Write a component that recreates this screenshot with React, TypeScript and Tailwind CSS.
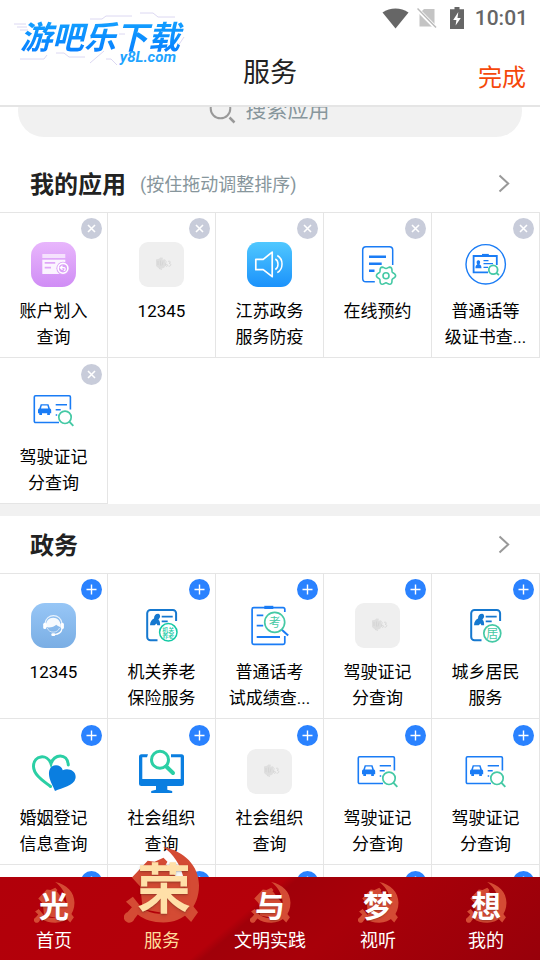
import React from "react";

interface IApp {
  name: string;
  icon: React.ReactNode;
}

interface ITab {
  label: string;
  char: string;
  active?: boolean;
}

const BLUE = "#1a7cf5";
const DEEP = "#1578cf";
const GREEN = "#45c9a5";
const CJK = "'Noto Sans CJK SC', sans-serif";

// six rounded teeth around (31, 33.7)
const gearPath =
  Array.from({ length: 60 }, (_, i) => {
    const a = (i / 60) * Math.PI * 2;
    const r = 8.4 + 1.2 * Math.cos(6 * a);
    return `${i ? "L" : "M"}${(31 + r * Math.cos(a)).toFixed(2)} ${(33.7 + r * Math.sin(a)).toFixed(2)}`;
  }).join("") + "z";

const Icon = ({ children }: { children: React.ReactNode }) => (
  <svg viewBox="0 0 45 45" className="block size-[45px]" fill="none" aria-hidden="true">
    {children}
  </svg>
);

const AccountIcon = () => (
  <Icon>
    <defs>
      <linearGradient id="account" x1="0" y1="0" x2="0" y2="1">
        <stop offset="0" stopColor="#e8b6fc" />
        <stop offset="1" stopColor="#d08df5" />
      </linearGradient>
    </defs>
    <rect width="45" height="45" rx="14" fill="url(#account)" />
    <rect x="11.3" y="12" width="23" height="4" fill="#fff" fillOpacity=".65" />
    <path d="M11.3 17.7h23V32h-23z" fill="#fff" fillOpacity=".88" />
    <path d="M13.7 20.8h10.5M13.7 25.7H20" stroke="#dfa6f8" strokeWidth="1.7" />
    <circle cx="32" cy="26.3" r="6.6" fill="#dca0f8" />
    <circle cx="32" cy="26.3" r="4.9" stroke="#fff" strokeWidth="1.6" />
    <path d="M31.5 23.7l-2.3 2 2.3 2M29.5 25.7h3.6c1.5 0 1.5 2.8-.4 3" stroke="#fff" strokeWidth="1.2" />
  </Icon>
);

const EmptyIcon = () => (
  <Icon>
    <rect width="45" height="45" rx="9" fill="#efefef" />
    <path d="M17 17.5l3-.8 1.3-1.2 2.700.3-.6 2 2.400-.5 1.200 1.300-1 2.400 1 1.800-1.800 3-2.800 1-2.800-.5-2.500-2.200z" fill="#dedede" />
    <path d="M19 19v4M21.5 18.5v5M24 19.5l-1 4M20 26.5l3 1" stroke="#cfcfcf" strokeWidth=".6" />
    <path d="M27.500 19.500c-1.500 2-1.300 5 .2 4.800 1.600-.3.8-2.800-.7-1.600M29 19.500c2.600-1.200 3 1.200 1 1.800 2.600 0 2.300 3.400-.5 2.800" stroke="#d3d3d3" strokeWidth=".8" />
  </Icon>
);

const SpeakerIcon = () => (
  <Icon>
    <defs>
      <linearGradient id="speaker" x1="0" y1="0" x2="0" y2="1">
        <stop offset="0" stopColor="#50c8ff" />
        <stop offset="1" stopColor="#1b92fb" />
      </linearGradient>
    </defs>
    <rect width="45" height="45" rx="11" fill="url(#speaker)" />
    <path d="M8.8 17.3h7.4l9-7.2v24.6l-9-7H8.8z" stroke="#fff" strokeWidth="1.7" strokeLinejoin="round" />
    <path d="M28.3 17c3.6 2 3.6 8.3 0 10.5M30.3 13.5c6.3 3.6 6.3 13.6 0 17.2" stroke="#fff" strokeWidth="1.5" />
  </Icon>
);

const BookingIcon = () => (
  <Icon>
    <path d="M19.8 39.7H11a3.3 3.3 0 0 1-3.3-3.3V8A3.3 3.3 0 0 1 11 4.7h23.4A3.3 3.3 0 0 1 37.7 8v15" stroke={BLUE} strokeWidth="1.5" />
    <path d="M14 14.7h17M14 21.7h12.7M14 28.7h5.5" stroke={BLUE} strokeWidth="2.5" />
    <path d={gearPath} stroke={GREEN} strokeWidth="1.6" strokeLinejoin="round" />
    <circle cx="31" cy="33.7" r="3" stroke={GREEN} strokeWidth="1.6" />
  </Icon>
);

const MandarinIcon = () => (
  <Icon>
    <circle cx="22.7" cy="22.3" r="19.7" stroke={BLUE} strokeWidth="1.4" />
    <path d="M25 30.3H10.6V14h23.2v9" stroke={BLUE} strokeWidth="1.8" />
    <path d="M19 14.5v-2.6h6.8v2.6z" fill={BLUE} />
    <path d="M12.4 26.3c0-2.7 1-3.6 2-3.8-1.4-2-.7-4.2 1-4.2s2.4 2.2 1 4.2c1.1.2 2.1 1.1 2.1 3.8z" fill={BLUE} />
    <path d="M20.5 18.7h5M20.5 21.7H30M20.5 25.3H25" stroke={BLUE} strokeWidth="1.3" />
    <circle cx="30.2" cy="27.7" r="4.4" stroke={GREEN} strokeWidth="1.8" />
    <path d="M33.3 31l2.7 2" stroke={GREEN} strokeWidth="1.8" />
  </Icon>
);

const LicenceIcon = () => (
  <Icon>
    <path d="M28 34.5H4.5a1.2 1.2 0 0 1-1.2-1.2V9a1.2 1.2 0 0 1 1.2-1.2h33.7A1.2 1.2 0 0 1 39.4 9v12.5" stroke={BLUE} strokeWidth="1.6" />
    <path d="M9.7 16.2h7.8l1.4 4.3c1 .4 1.3 1 1.3 2v2.8h-1.3V27h-2.7v-1.7H11V27H8.3v-1.7H7v-2.8c0-1 .3-1.600 1.300-2z" fill={BLUE} />
    <path d="M10.8 17.6h5.6l.8 2.9H10z" fill="#fff" />
    <path d="M24.7 16.7H36M24.7 21.8h5M24.7 27h1.5" stroke={BLUE} strokeWidth="1.6" />
    <circle cx="34" cy="29.3" r="6.2" stroke={GREEN} strokeWidth="1.7" />
    <path d="M38.3 33.7l4 4.2" stroke={GREEN} strokeWidth="1.9" />
  </Icon>
);

const HotlineIcon = () => (
  <Icon>
    <defs>
      <linearGradient id="hotline" x1="0" y1="0" x2="0" y2="1">
        <stop offset="0" stopColor="#97c6f6" />
        <stop offset="1" stopColor="#7aaee4" />
      </linearGradient>
    </defs>
    <rect width="45" height="45" rx="14" fill="url(#hotline)" />
    <path d="M14 20.5c1-10.5 16-10.5 17 0" stroke="#fff" strokeOpacity=".8" strokeWidth="1.2" />
    <path d="M15 24c-1.500-12.500 15.700-12.500 14.700 0-1.900-.4-3.600-1.300-4.400-2.300-2 2-6.800 3.600-10.300 2.300z" fill="#fff" fillOpacity=".92" />
    <path d="M16.3 25c1.500 5.500 10.500 5.500 12.200 0" stroke="#fff" strokeOpacity=".6" strokeWidth="1" />
    <rect x="12.200" y="19.700" width="3.300" height="6.400" rx="1.600" fill="#fff" />
    <rect x="29.600" y="19.700" width="3.300" height="6.400" rx="1.600" fill="#fff" />
    <path d="M31 26c-.8 3.500-4 5.300-7.500 5.500" stroke="#fff" strokeWidth="1.200" />
    <rect x="20.300" y="30.300" width="4" height="2.600" rx="1.200" fill="#fff" />
  </Icon>
);

const PersonCard = ({ children }: { children: React.ReactNode }) => (
  <Icon>
    <path d="M18.5 37.3h-7A3.3 3.3 0 0 1 8.200 34V10.300A3.300 3.300 0 0 1 11.500 7h22.300a3.300 3.300 0 0 1 3.300 3.300V18" stroke={DEEP} strokeWidth="2" />
    <path d="M11 22.300c.2-3.600 1.600-5.700 4-6.800 0-3.200 1.800-5 4.400-4.800 1.600.3 1.700 1.800 1.700 3.200l-1.700 2.800c1.800 1.200 1.700 3.500 1.700 5.600h-2.700l-.9-1.800-1.800 1.800z" fill={DEEP} />
    <path d="M22.700 13.700h11M22.700 18.300h6" stroke={DEEP} strokeWidth="1.700" />
    {children}
  </Icon>
);

const PensionIcon = () => (
  <PersonCard>
    <circle cx="29.300" cy="29.300" r="8.700" fill="#fff" stroke="#12c9a4" strokeWidth="1.500" />
    <text x="29.300" y="28.900" fontSize="6" fontFamily={CJK} fontWeight="500" textAnchor="middle" fill="#12c9a4">机关</text>
    <text x="29.300" y="34.900" fontSize="6" fontFamily={CJK} fontWeight="500" textAnchor="middle" fill="#12c9a4">养老</text>
  </PersonCard>
);

const ResidentIcon = () => (
  <PersonCard>
    <circle cx="29.300" cy="30.300" r="8.500" fill="#fff" stroke={GREEN} strokeWidth="1.700" />
    <text x="29.300" y="34.500" fontSize="12" fontFamily={CJK} textAnchor="middle" fill={GREEN}>居</text>
  </PersonCard>
);

const ExamIcon = () => (
  <Icon>
    <path d="M37.8 9V6.3a1.6 1.6 0 0 0-1.6-1.6H6.7a1.6 1.6 0 0 0-1.6 1.6v33.4a1.6 1.6 0 0 0 1.6 1.6h29.5a1.6 1.6 0 0 0 1.6-1.6V33" stroke={BLUE} strokeWidth="1.7" />
    <path d="M17.3 6V2.8h9V6z" fill={BLUE} />
    <path d="M9.7 12.3h6.6M9.7 22.7h6.5M9.7 34H33" stroke={BLUE} strokeWidth="1.8" />
    <path d="M34.5 26.5l6.7 6" stroke={BLUE} strokeWidth="2" />
    <circle cx="27.7" cy="19.3" r="10" fill="#fff" stroke={GREEN} strokeWidth="1.7" />
    <text x="27.7" y="23.700" fontSize="12" fontFamily={CJK} textAnchor="middle" fill={GREEN}>考</text>
  </Icon>
);

const MarriageIcon = () => (
  <Icon>
    <path d="M19.5 37.5C14 33 2.5 26.5 2.5 17.3 2.5 6 16.5 4.5 20 14.7 22.5 5 36.5 3.5 37.3 16" stroke="#2bcfa5" strokeWidth="3" strokeLinecap="round" />
    <path d="M24 42c-1.8-5-7.5-13-5.7-20.5C20 14.5 30 14.7 31.8 21.2c6-2.6 14 1 12.7 8C43 37 31 38.5 24 42z" fill="#0a7ee0" />
  </Icon>
);

const SocietyIcon = () => (
  <Icon>
    <path d="M9 5.3H2.5A2.5 2.5 0 0 0 0 7.8v26.7A2.5 2.5 0 0 0 2.5 37H17v3.700l-4.800 1.200V44h21v-2.100l-4.900-1.200V37h14.200a2.500 2.500 0 0 0 2.500-2.500V7.800a2.500 2.500 0 0 0-2.500-2.500H32v3h9.700V30H3.300V8.300H8z" fill="#0a7ee0" />
    <circle cx="21" cy="10.800" r="8.500" stroke="#2bcfa5" strokeWidth="3" />
    <path d="M27.300 17.500l6.700 6.500" stroke="#2bcfa5" strokeWidth="4" strokeLinecap="round" />
  </Icon>
);

const Emblem = () => (
  <svg viewBox="0 0 75 77" className="block size-full" aria-hidden="true">
    <g fill="#d44b34">
      <path d="M38.7 0C60 4 75 19 75 39c0 22-15 37.500-36 37.500-11 0-19-2.500-26-8l-3.500 4.500a5.500 5.500 0 1 1-7-7L7 61l-6-5.500 7-5 8 10C24 67 33 69 41 66.500 57 61.500 63 45 59 30 56 18 49 7 38.700 0z" />
      <path d="M7 31l16-17 7 1 9-4 4 4-4 7 35 44-7 10L33 41 22 47z" />
      <path d="M14 27l28-9 20 25-12 26-32-6z" />
    </g>
  </svg>
);

const myApps: IApp[] = [
  { name: "账户划入查询", icon: <AccountIcon /> },
  { name: "12345", icon: <EmptyIcon /> },
  { name: "江苏政务服务防疫", icon: <SpeakerIcon /> },
  { name: "在线预约", icon: <BookingIcon /> },
  { name: "普通话等级证书查...", icon: <MandarinIcon /> },
  { name: "驾驶证记分查询", icon: <LicenceIcon /> },
];

const govApps: IApp[] = [
  { name: "12345", icon: <HotlineIcon /> },
  { name: "机关养老保险服务", icon: <PensionIcon /> },
  { name: "普通话考试成绩查...", icon: <ExamIcon /> },
  { name: "驾驶证记分查询", icon: <EmptyIcon /> },
  { name: "城乡居民服务", icon: <ResidentIcon /> },
  { name: "婚姻登记信息查询", icon: <MarriageIcon /> },
  { name: "社会组织查询", icon: <SocietyIcon /> },
  { name: "社会组织查询", icon: <EmptyIcon /> },
  { name: "驾驶证记分查询", icon: <LicenceIcon /> },
  { name: "驾驶证记分查询", icon: <LicenceIcon /> },
  { name: "", icon: null },
  { name: "", icon: null },
  { name: "", icon: null },
  { name: "", icon: null },
  { name: "", icon: null },
];

const tabs: ITab[] = [
  { label: "首页", char: "光" },
  { label: "服务", char: "荣", active: true },
  { label: "文明实践", char: "与" },
  { label: "视听", char: "梦" },
  { label: "我的", char: "想" },
];

const AppGrid = ({ apps, mode }: { apps: IApp[]; mode: "remove" | "add" }) => (
  <ul className="grid grid-cols-5 grid-rows-[145px] auto-rows-[146px] border-t border-[#e5e5e5]">
    {apps.map((item, id) => (
      <li key={id} className="flex flex-col justify-end border-r border-b border-[#e5e5e5]">
        <div className="relative h-36">
          <a href="#" className="flex flex-col items-center px-2.5 pt-[29px]">
            {item.icon}
            <span className="mt-[11px] max-w-[83px] text-center text-[17px] leading-[26px] text-black">
              {item.name}
            </span>
          </a>
          <button
            aria-label={mode === "add" ? "添加" : "移除"}
            className={`absolute top-[5px] right-[5px] flex size-[21px] items-center justify-center rounded-full ${
              mode === "add" ? "bg-[#2a82ff]" : "bg-[#c8ccda]"
            }`}
          >
            <svg viewBox="0 0 21 21" className="size-full" stroke="#fff" fill="none">
              {mode === "add" ? (
                <path d="M10.5 5.5v10M5.5 10.5h10" strokeWidth="1.4" />
              ) : (
                <path d="M7 7l7 7M14 7l-7 7" strokeWidth="1.6" />
              )}
            </svg>
          </button>
        </div>
      </li>
    ))}
  </ul>
);

const SectionHead = ({ title, hint }: { title: string; hint?: string }) => (
  <div className="flex h-[57px] items-center px-[30px]">
    <h2 className="pt-0.5 text-2xl font-bold text-[#222]">{title}</h2>
    {hint && <span className="ml-3.5 pt-0.5 text-lg text-[#87969c]">{hint}</span>}
    <button aria-label="更多" className="ml-auto">
      <svg viewBox="0 0 12 20" className="h-5 w-3" fill="none" stroke="#999" strokeWidth="2">
        <path d="M1.5 1.500l8.700 8-8.700 8" />
      </svg>
    </button>
  </div>
);

const Logo = () => (
  <div className="absolute top-3 left-3.5 h-[54px] w-[172px] italic">
    <svg viewBox="0 0 172 54" className="absolute inset-0 size-full" fill="none" stroke="#dcd8f2" aria-hidden="true">
      <path d="M0 12h12M3 15h10M6 18h8M76 7h12l4-3h26M126 1h13l5 4h17M6 47h24l3-4M42 41h8l5 4h16M76 51l14-12M92 47h5l6 6M164 34l6-9M105 22h6" />
    </svg>
    <p className="relative bg-linear-to-b from-[#1aa8ff] to-[#0a7cff] bg-clip-text pt-2 pl-1.5 text-[32px] leading-9 font-bold whitespace-nowrap text-transparent">
      游吧乐下载
    </p>
    <p className="absolute top-[37px] right-2.5 text-[15px] leading-4 font-bold text-[#1fa4ff]">y8L.com</p>
  </div>
);

const StatusBar = () => (
  <div className="flex h-9 items-center justify-end pr-3 text-[#666]">
    <svg viewBox="0 0 27 21" className="h-[21px] w-[27px]" fill="currentColor" aria-hidden="true">
      <path d="M.5 4.500C8-1 19-1 26.500 4.500L13.500 20.500z" />
    </svg>
    <svg viewBox="0 0 20 22" className="mr-[13px] ml-2 h-[22px] w-5" aria-hidden="true">
      <path d="M7 2h10.500v17.500H2.500V6.500z" fill="#c4c4c4" />
      <path d="M0 2l19 19" stroke="#fff" strokeWidth="4" />
      <path d="M.5 1.500l18.500 19" stroke="#bbb" strokeWidth="1.500" />
    </svg>
    <svg viewBox="0 0 14 22" className="mr-[11px] h-[22px] w-3.5" aria-hidden="true">
      <path d="M4.500 0h5v2.200H14V22H0V2.200h4.500z" fill="#666" />
      <path d="M8.300 5L3.200 13h3.200l-.8 5.500L10.800 11H7.500z" fill="#fff" />
    </svg>
    <span className="text-[21px] leading-6 font-medium">10:01</span>
  </div>
);

const App = () => {
  return (
    <div className="flex h-screen flex-col bg-white font-['Roboto','Noto_Sans_CJK_SC',sans-serif]">
      <header className="relative border-b-2 border-[#e5e5e5]">
        <StatusBar />
        <div className="grid h-[69px] grid-cols-3 items-center px-3.5 pt-1.5">
          <h1 className="col-start-2 text-center text-[27px] text-[#222]">服务</h1>
          <button className="mt-2 justify-self-end text-2xl text-[#f5480a]">完成</button>
        </div>
        <Logo />
      </header>

      <main className="min-h-0 flex-1 overflow-hidden">
        {/* pill is scrolled half under the header */}
        <label className="mx-[18px] -mt-[22px] mb-[18px] flex h-[52px] items-center justify-center rounded-full bg-[#f1f1f1]">
          <svg viewBox="0 0 27 27" className="size-[27px]" fill="none" stroke="#999" aria-hidden="true">
            <circle cx="11.500" cy="10.500" r="9.800" strokeWidth="2" />
            <path d="M20.500 19.500l5 5" strokeWidth="2.500" />
          </svg>
          <input
            type="text"
            aria-label="搜索应用"
            placeholder="搜索应用"
            className="ml-2.5 w-[86px] text-[21px] outline-none placeholder:text-[#87969c]"
          />
        </label>

        <section>
          <SectionHead title="我的应用" hint="(按住拖动调整排序)" />
          <AppGrid apps={myApps} mode="remove" />
        </section>
        <div className="h-3 bg-[#f1f1f1]" />
        <section>
          <SectionHead title="政务" />
          <AppGrid apps={govApps} mode="add" />
        </section>
      </main>

      <nav className="relative grid grid-cols-5 bg-[linear-gradient(140deg,#b1000a_0%,#b5000a_45%,#a00009_47%,#a80009_62%,#98000a_100%)]">
        {tabs.map((tab) => (
          <a key={tab.label} href="#" className="flex flex-col items-center pt-[5px] pb-[7px]">
            <span className="relative size-[41px]">
              <span
                className={
                  tab.active
                    ? "absolute bottom-0 left-1/2 block size-[76px] -translate-x-1/2"
                    : "absolute inset-0 block"
                }
              >
                <Emblem />
                <span
                  className={`absolute inset-0 flex items-center justify-center leading-none font-bold ${
                    tab.active
                      ? "pt-3 pl-1 text-[54px] text-[#ffe0a8] text-shadow-md"
                      : "pt-2 text-[30px] text-white text-shadow-sm"
                  }`}
                >
                  {tab.char}
                </span>
              </span>
            </span>
            <span
              className={`mt-1.5 text-lg leading-6 whitespace-nowrap ${
                tab.active ? "text-[#ffdc9c]" : "text-white"
              }`}
            >
              {tab.label}
            </span>
          </a>
        ))}
      </nav>
    </div>
  );
};

export default App;
